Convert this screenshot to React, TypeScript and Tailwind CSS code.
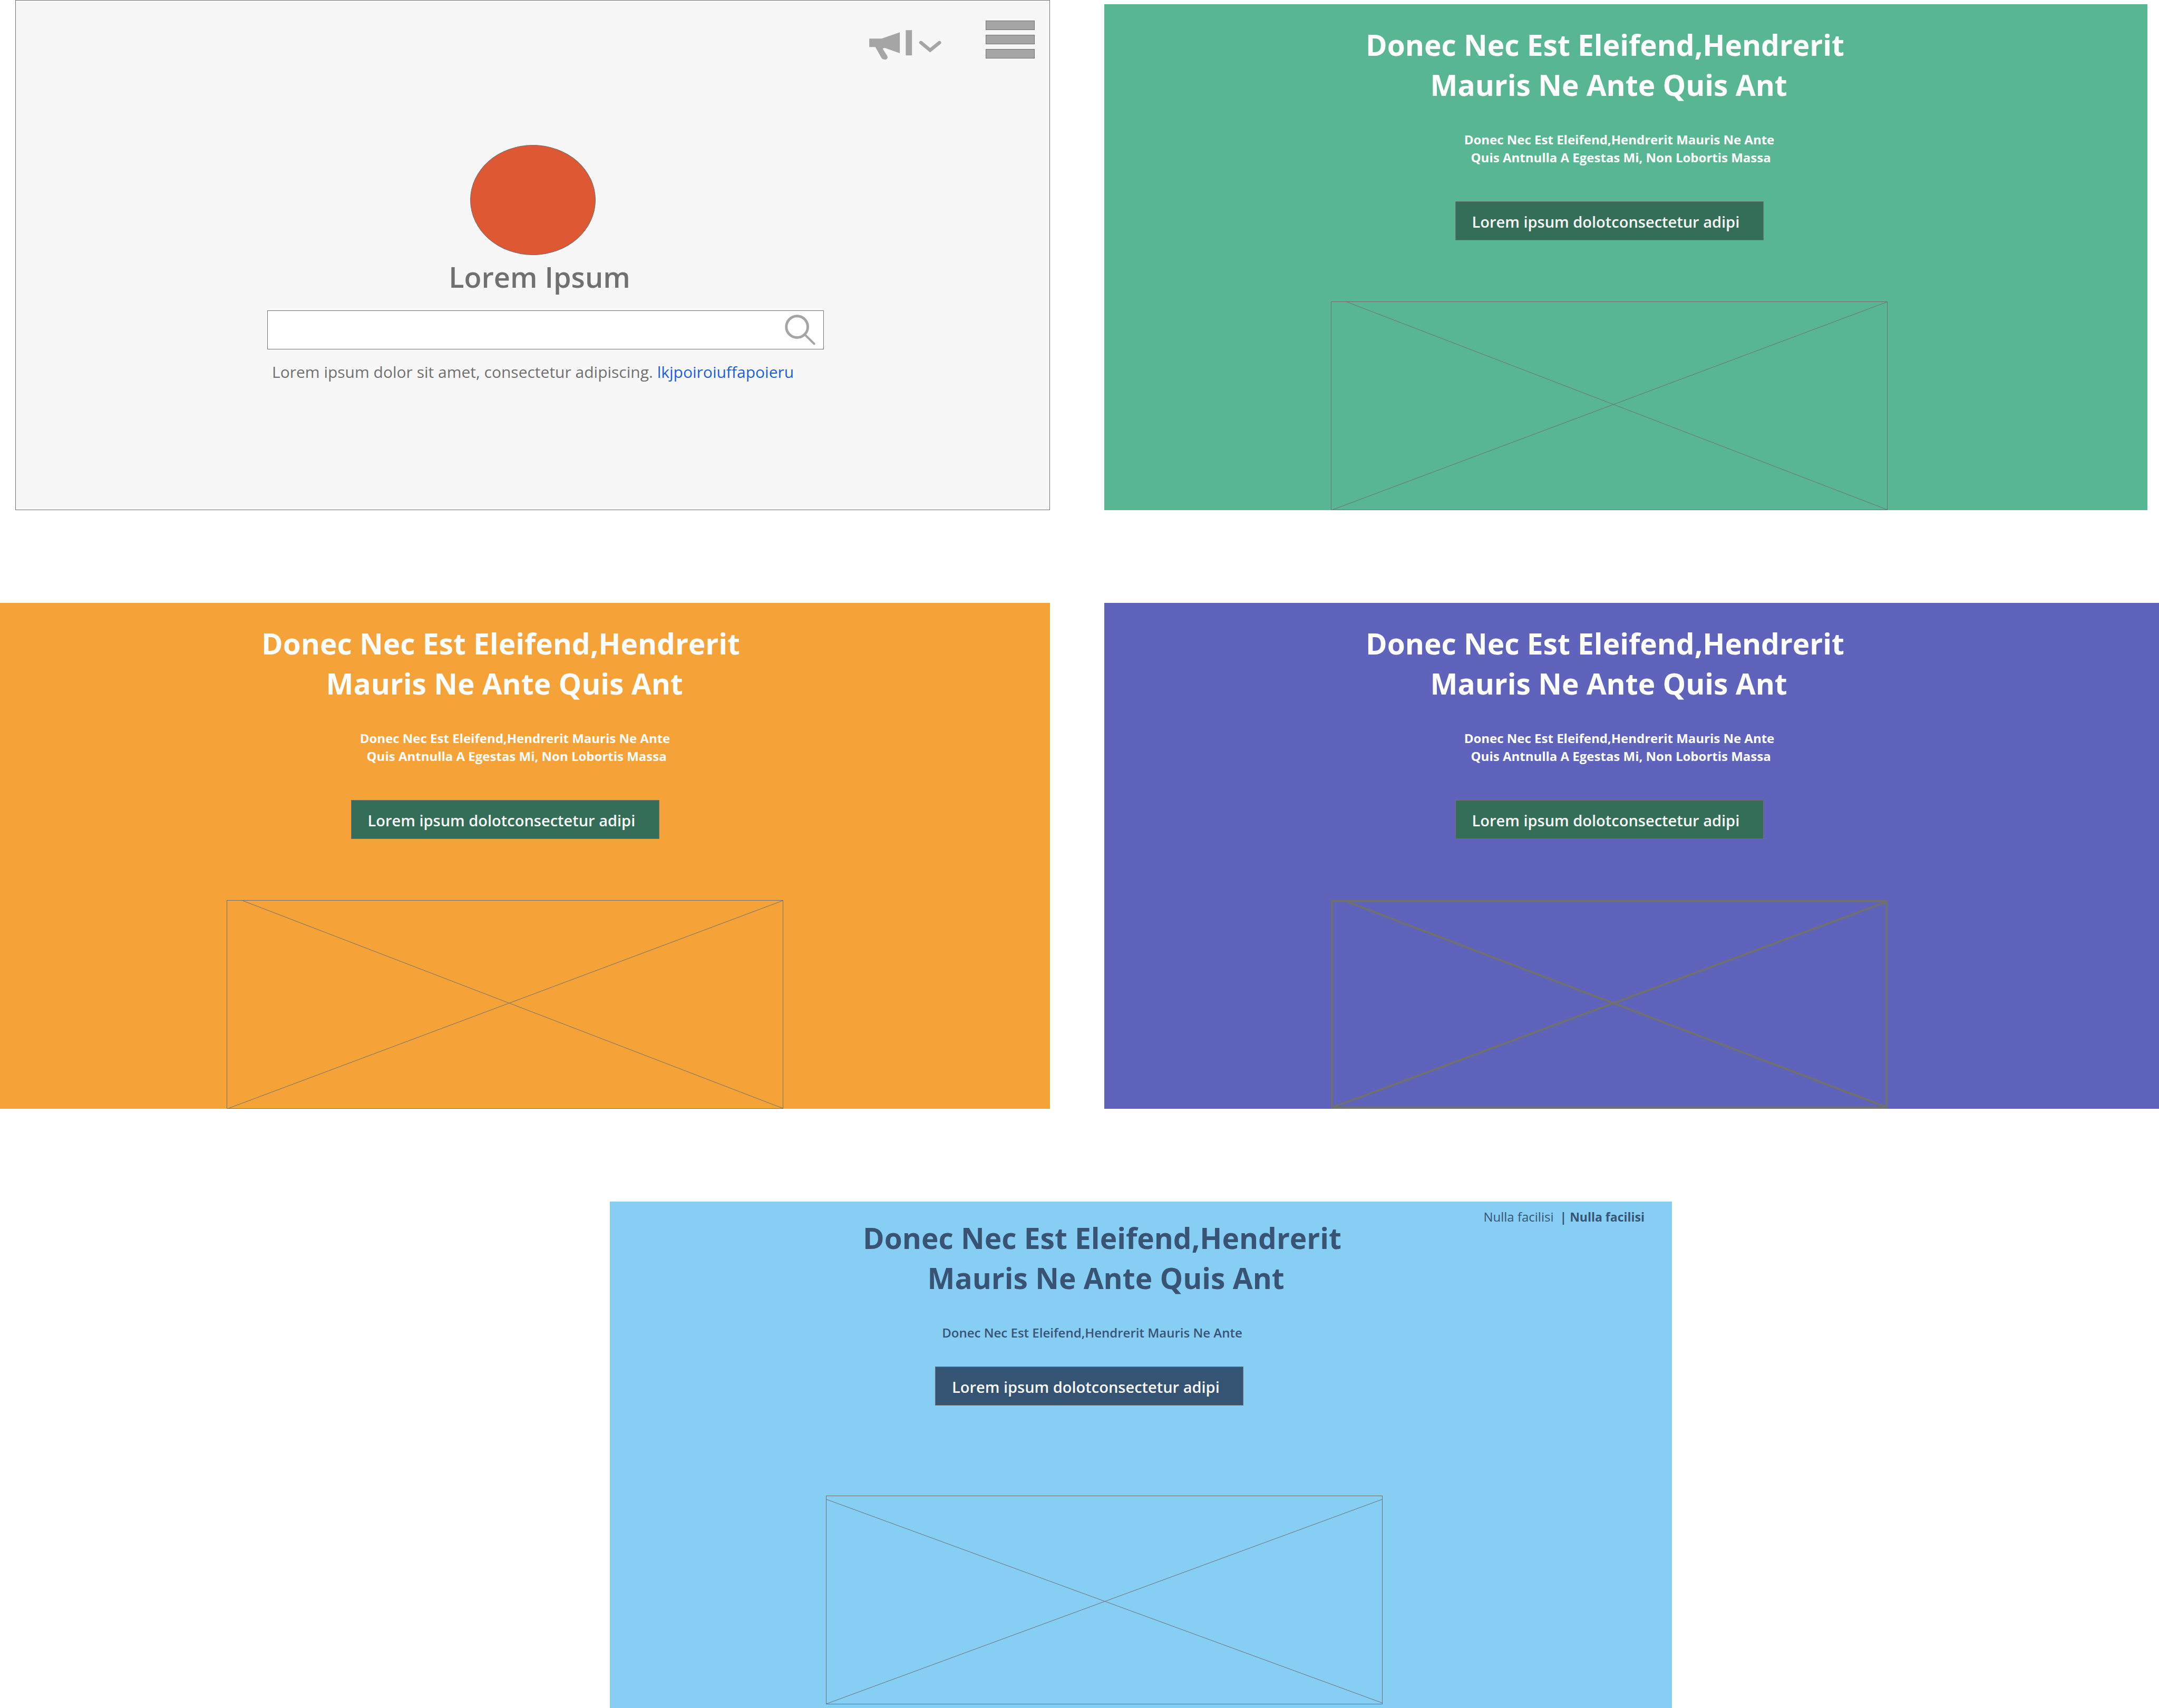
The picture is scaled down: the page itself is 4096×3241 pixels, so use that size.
import type { ReactNode } from "react";

function MegaphoneMenuIcon() {
  return (
    <svg viewBox="98 128 468 196" className="h-[58px] w-[139px]" aria-hidden="true">
      <g fill="#a5a5a5">
        <path d="M101 186H180L297 146V280L204 247Q189 245 188 253L216 297Q222 310 213 317Q208 321 199 321Q187 321 180 311L140 240H101Z" />
        <path d="M335 132H375V294H335Z" />
      </g>
      <path d="M432 212L491 261L551 212" fill="none" stroke="#a5a5a5" strokeWidth="22" strokeLinecap="round" />
    </svg>
  );
}

function SearchIcon() {
  return (
    <svg viewBox="71 62 198 198" className="size-[58px]" aria-hidden="true">
      <circle cx="150" cy="141" r="69.5" fill="none" stroke="#a5a5a5" strokeWidth="17" />
      <path d="M204 195L261 251" stroke="#a5a5a5" strokeWidth="14" strokeLinecap="round" />
    </svg>
  );
}

type FrameProps = { diagonals: string; bold?: boolean };

function PlaceholderFrame({ diagonals, bold }: FrameProps) {
  return (
    <div className={`h-[396px] w-full border-[#707070] ${bold ? "border-4" : "border"}`}>
      <svg viewBox="0 0 1187 446" preserveAspectRatio="none" className="block size-full" aria-hidden="true">
        <path d={diagonals} fill="none" stroke="#707070" strokeWidth={bold ? 4 : 1} vectorEffect="non-scaling-stroke" />
      </svg>
    </div>
  );
}

const CROSS = "M33 0L1187 446M1187 0L3 446";
const LOW_CROSS = "M0 7L1187 444M1187 7L0 446";

function Headline({ className }: { className: string }) {
  return (
    <h2 className={`text-center text-[55px] leading-[76px] font-bold ${className}`}>
      Donec Nec Est Eleifend,Hendrerit
      <br />
      &nbsp;Mauris Ne Ante Quis Ant
    </h2>
  );
}

function ActionButton({ className }: { className: string }) {
  return (
    <button
      type="button"
      className={`h-[74px] w-[585px] border border-[#707070] pt-[3px] pl-[31px] text-left text-[29px] font-semibold text-[#f7f7f7] ${className}`}
    >
      Lorem ipsum dolotconsectetur adipi
    </button>
  );
}

function PromoPanel({ className, boldFrame }: { className: string; boldFrame?: boolean }) {
  return (
    <section className={`pt-[39px] pl-[430px] text-white ${className}`}>
      <div className="flex w-full max-w-[1056px] flex-col">
        <Headline className="pr-4" />
        <p className="mt-[49px] pl-[38px] text-center text-[24px] leading-[34px] font-bold">
          Donec Nec Est Eleifend,Hendrerit Mauris Ne Ante
          <br />
          &nbsp;Quis Antnulla A Egestas Mi, Non Lobortis Massa
        </p>
        <ActionButton className="mt-[66px] self-center bg-[#346e58]" />
        <div className="mt-[116px]">
          <PlaceholderFrame diagonals={CROSS} bold={boldFrame} />
        </div>
      </div>
    </section>
  );
}

function SearchPanel() {
  return (
    <section className="ml-[29px] border border-[#707070] bg-[#f7f7f7] pb-[241px] text-[#707070]">
      <header className="flex items-start justify-end gap-[83px] pt-[38px] pr-[28px]">
        <button type="button" aria-label="Announcements" className="mt-[17px] block">
          <MegaphoneMenuIcon />
        </button>
        <button type="button" aria-label="Menu" className="flex w-[93px] flex-col gap-[9px]">
          <Bar />
          <Bar />
          <Bar />
        </button>
      </header>
      <div className="pl-[477px]">
        <div className="mt-[161px] flex w-full max-w-[1056px] flex-col">
          <div className="flex justify-center pr-[48px]">
            <div className="h-[209px] w-[238px] rounded-[50%] border border-[#707070] bg-[#dd5833]" />
          </div>
          <h1 className="mt-[5px] pr-[23px] text-center text-[54px] leading-[72px] font-semibold">Lorem Ipsum</h1>
          <form className="mt-[28px] flex h-[74px] items-center border border-[#707070] bg-white pr-[15px]">
            <input type="text" aria-label="Search" className="h-full min-w-0 flex-1 px-6 text-[30px] outline-none" />
            <button type="button" aria-label="Submit search">
              <SearchIcon />
            </button>
          </form>
          <p className="mt-[23px] pl-[9px] text-[30px] leading-[40px]">
            Lorem ipsum dolor sit amet, consectetur adipiscing.{" "}
            <a href="#more" className="text-[#1c5fe0]">
              lkjpoiroiuffapoieru
            </a>
          </p>
        </div>
      </div>
    </section>
  );
}

function Bar() {
  return <span className="block h-[18px] border border-[#707070] bg-[#a5a5a5]" />;
}

function AccountPanel() {
  return (
    <section className="flex items-start justify-between bg-[#87cef5] pr-[52px] pb-[7px] pl-[410px] text-[#385373]">
      <div className="flex w-full max-w-[1056px] flex-col pt-[31px]">
        <Headline className="pr-2" />
        <p className="mt-[49px] pr-[46px] text-center text-[24px] leading-[34px] font-semibold">
          Donec Nec Est Eleifend,Hendrerit Mauris Ne Ante
        </p>
        <div className="mt-[47px] flex justify-center pr-[57px]">
          <ActionButton className="bg-[#355372]" />
        </div>
        <div className="mt-[171px]">
          <PlaceholderFrame diagonals={LOW_CROSS} />
        </div>
      </div>
      <nav className="flex shrink-0 items-baseline pt-3 text-[24px] leading-[34px]">
        <NavLink className="mr-3 font-normal">Nulla facilisi</NavLink>
        <span className="mr-1.5 text-[23px] font-bold">|</span>
        <NavLink className="text-[23px] font-bold">Nulla facilisi</NavLink>
      </nav>
    </section>
  );
}

function NavLink({ className, children }: { className: string; children: ReactNode }) {
  return (
    <a href="#account" className={className}>
      {children}
    </a>
  );
}

export default function App() {
  return (
    <main className="flex flex-col gap-[176px] bg-white font-['Open_Sans','Noto_Sans',sans-serif]">
      <div className="grid grid-cols-[1992fr_2001fr] items-end gap-x-[103px] gap-y-[176px]">
        <SearchPanel />
        <PromoPanel className="mr-[22px] bg-[#59b693]" />
        <PromoPanel className="bg-[#f5a238]" />
        <PromoPanel className="bg-[#5f63bc]" boldFrame />
      </div>
      <div className="grid grid-cols-[1157fr_2015fr_924fr]">
        <div className="col-start-2">
          <AccountPanel />
        </div>
      </div>
    </main>
  );
}
